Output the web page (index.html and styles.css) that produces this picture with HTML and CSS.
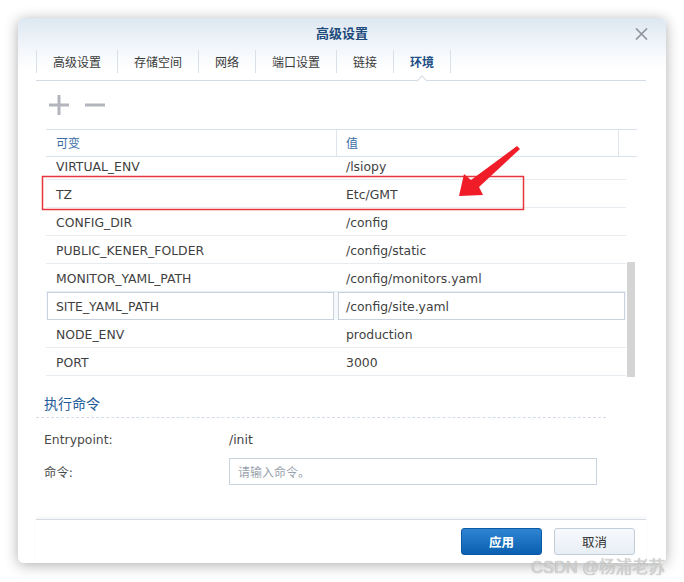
FILE: index.html
```html
<!DOCTYPE html>
<html lang="zh-CN">
<head>
  <meta charset="UTF-8" />
  <title>高级设置</title>
  <link rel="stylesheet" href="styles.css">
</head>
<body>
  <div class="dialog">
    <div class="titlebar">
      <span class="title">高级设置</span>
      <svg class="close" width="13" height="12" viewBox="0 0 13 12"><path d="M1 0.5 L12 11.5 M12 0.5 L1 11.5" stroke="#8e959e" stroke-width="1.7" fill="none"/></svg>
    </div>

    <!-- 标签页 -->
    <div class="tabs">
      <div class="tab">高级设置</div>
      <div class="tab">存储空间</div>
      <div class="tab">网络</div>
      <div class="tab">端口设置</div>
      <div class="tab">链接</div>
      <div class="tab active">环境</div>
    </div>

    <!-- 工具栏 -->
    <div class="toolbar">
      <svg width="20" height="20" viewBox="0 0 20 20"><path d="M10 0 V20 M0 10 H20" stroke="#b2b6bc" stroke-width="3"/></svg>
      <svg width="20" height="20" viewBox="0 0 20 20"><path d="M0 10 H20" stroke="#b2b6bc" stroke-width="3"/></svg>
    </div>

    <!-- 环境变量表格 -->
    <div class="grid">
      <div class="grid-head">
        <div class="hc c1">可变</div>
        <div class="hc c2">值</div>
        <div class="hc c3"></div>
      </div>
      <div class="grid-body">
        <div class="rows">
          <div class="row"><div class="cell c1">VIRTUAL_ENV</div><div class="cell c2">/lsiopy</div></div>
          <div class="row"><div class="cell c1">TZ</div><div class="cell c2">Etc/GMT</div></div>
          <div class="row"><div class="cell c1">CONFIG_DIR</div><div class="cell c2">/config</div></div>
          <div class="row"><div class="cell c1">PUBLIC_KENER_FOLDER</div><div class="cell c2">/config/static</div></div>
          <div class="row"><div class="cell c1">MONITOR_YAML_PATH</div><div class="cell c2">/config/monitors.yaml</div></div>
          <div class="row editing">
            <div class="cell c1"><div class="edit">SITE_YAML_PATH</div></div>
            <div class="cell c2"><div class="edit">/config/site.yaml</div></div>
          </div>
          <div class="row"><div class="cell c1">NODE_ENV</div><div class="cell c2">production</div></div>
          <div class="row"><div class="cell c1">PORT</div><div class="cell c2">3000</div></div>
        </div>
        <div class="scroll-thumb"></div>
      </div>
    </div>

    <!-- 执行命令 -->
    <div class="section">
      <div class="section-title">执行命令</div>
      <div class="field first"><span class="label">Entrypoint:</span><span class="value">/init</span></div>
      <div class="field"><span class="label">命令:</span><input class="cmd" placeholder="请输入命令。" /></div>
    </div>

    <div class="footer">
      <button class="btn primary">应用</button>
      <button class="btn">取消</button>
    </div>
  </div>

  <!-- 标注 -->
  <svg class="annot" width="684" height="582" viewBox="0 0 684 582">
    <rect x="42.5" y="176.5" width="481" height="33" fill="none" stroke="#e8343c" stroke-width="1.5"/>
    <polygon points="459,196 464,174 471,180 517,146 520,149 479,187 483,195" fill="#f01c28"/>
  </svg>
  <div class="watermark">CSDN @杨浦老苏</div>
</body>
</html>
```

FILE: styles.css
```css
body { margin:0; background:#fff; font-family:"DejaVu Sans","Noto Sans CJK SC",sans-serif; font-size:12.4px; color:#3f3f3f; position:relative; height:582px; overflow:hidden; }

.dialog { position:relative; margin:18px 0 0 18px; width:648px; height:545px; border-radius:6px; background:linear-gradient(#dde7f1 0, #f4f7fb 32px, #fff 52px); box-shadow:0 2px 14px rgba(0,0,0,.32); display:flex; flex-direction:column; }

/* 标题栏 */
.titlebar { height:29px; line-height:30px; text-align:center; }
.title { font-family:"Noto Sans CJK SC",sans-serif; font-size:13px; font-weight:bold; color:#1d4b7c; }
.close { position:absolute; right:18px; top:10px; }

/* 标签页 */
.tabs { display:flex; margin:0 20px 0 18px; padding:3px 0 7px; border-bottom:1px solid #d3dbe4; }
.tab { position:relative; padding:0 16px; height:23px; line-height:23px; border-left:1px solid #d9e0e8; font-family:"Noto Sans CJK SC",sans-serif; font-size:12px; color:#3a3a3a; }
.tab:last-child { border-right:1px solid #d9e0e8; }
.tab.active { color:#1d4f86; font-weight:bold; }
.tab.active::after { content:""; position:absolute; left:50%; bottom:-12px; width:7px; height:7px; margin-left:-4px; background:#fff; border-left:1px solid #d3dbe4; border-top:1px solid #d3dbe4; transform:rotate(45deg); }

/* 工具栏 */
.toolbar { height:48px; display:flex; align-items:center; gap:16px; padding-left:31px; }

/* 表格 */
.grid { margin-left:28px; width:591px; }
.grid-head { display:flex; height:28px; box-sizing:border-box; border-top:1px solid #d9e1ea; border-bottom:1px solid #d9e1ea; }
.hc { line-height:26px; font-family:"Noto Sans CJK SC",sans-serif; font-size:12px; color:#3b6ea8; box-sizing:border-box; }
.hc.c1 { width:291px; padding-left:10px; border-right:1px solid #dfe5ec; }
.hc.c2 { width:282px; padding-left:9px; border-right:1px solid #dfe5ec; }
.hc.c3 { flex:1; }

.grid-body { position:relative; height:220px; overflow:hidden; }
.rows { margin-top:-5px; width:580px; }
.row { display:flex; height:28px; box-sizing:border-box; border-bottom:1px solid #e7ecf1; }
.cell { line-height:29px; height:27px; box-sizing:border-box; white-space:nowrap; }
.cell.c1 { width:291px; padding-left:10px; }
.cell.c2 { width:289px; padding-left:9px; }
.row.editing { border-bottom:none; background:#f6f8fb; }
.row.editing .cell { padding:0; height:28px; }
.edit { height:28px; line-height:27px; box-sizing:border-box; border:1px solid #c8d3df; background:#fff; }
.row.editing .c1 .edit { margin:0 3px 0 1px; padding-left:8px; }
.row.editing .c2 .edit { margin:0 1px 0 1px; padding-left:7px; }
.scroll-thumb { position:absolute; left:581px; top:105px; bottom:0; width:8px; background:#d4d4d4; }

/* 执行命令 */
.section { margin:16px 0 0 18px; width:570px; }
.section-title { padding:0 0 4px 8px; line-height:20px; font-family:"Noto Sans CJK SC",sans-serif; font-size:14px; color:#1f5c99; border-bottom:1px dashed #d3dce6; }
.field { display:flex; align-items:center; padding-left:8px; margin-top:8px; }
.field.first { margin-top:10px; height:22px; }
.label { width:185px; color:#4a4a4a; }
.value { color:#3f3f3f; }
.cmd { width:368px; height:27px; box-sizing:border-box; border:1px solid #c9d3de; padding:0 8px; font-family:"Noto Sans CJK SC",sans-serif; font-size:12px; outline:none; }
.cmd::placeholder { color:#9aa3ad; }

/* 底部按钮 */
.footer { margin:auto 20px 0 18px; border-top:1px solid #d6dce3; box-shadow:0 -2px 3px rgba(0,0,0,.04); padding:8px 11px 8px 0; display:flex; justify-content:flex-end; gap:12px; }
.btn { width:81px; height:27px; border-radius:3px; border:1px solid #c3cdd9; background:linear-gradient(#f7f9fc, #e8eef5); font-family:"Noto Sans CJK SC",sans-serif; font-size:12.5px; color:#333; cursor:pointer; }
.btn.primary { border-color:#0b5aa6; background:linear-gradient(#2f84d2, #0a5fb0); color:#fff; font-weight:bold; }

/* 标注与水印 */
.annot { position:absolute; left:0; top:0; pointer-events:none; }
.watermark { position:absolute; left:531px; top:554px; font-family:"Liberation Sans","Noto Sans CJK SC",sans-serif; font-size:16.5px; color:rgba(215,215,215,.95); text-shadow:0 0 1px rgba(90,90,90,.55); white-space:nowrap; }
```
